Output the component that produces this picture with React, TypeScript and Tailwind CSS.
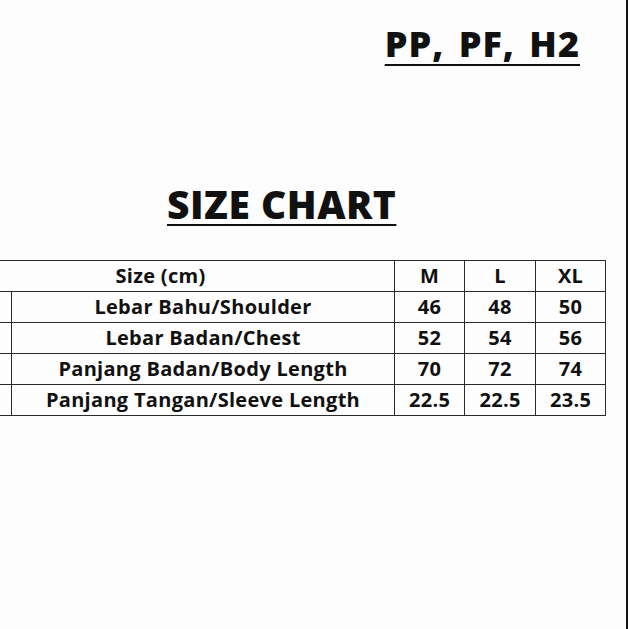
import React from 'react';

const ROWS = [
  { label: 'Lebar Bahu/Shoulder', m: '46', l: '48', xl: '50' },
  { label: 'Lebar Badan/Chest', m: '52', l: '54', xl: '56' },
  { label: 'Panjang Badan/Body Length', m: '70', l: '72', xl: '74' },
  { label: 'Panjang Tangan/Sleeve Length', m: '22.5', l: '22.5', xl: '23.5' },
];

const cell = 'border-[1.5px] border-[#2a2a2a] h-[31px] p-0 text-center align-middle leading-none';

export default function App() {
  return (
    <div className="flex w-[629px] h-[629px] overflow-hidden bg-white" style={{ fontFamily: '"Open Sans", Lato, sans-serif' }}>
      <div className="w-[626px] h-full bg-[#fdfdfd] flex flex-col text-[#111]">
        <div className="h-[22px]" />
        <div className="flex justify-end pr-[46px]">
          <h1 className="text-[36px] font-extrabold leading-[44px] tracking-[1px] [word-spacing:4px] underline decoration-[2px] underline-offset-[7px]">PP, PF, H2</h1>
        </div>
        <div className="h-[114px]" />
        <div className="pl-[167px]">
          <h2 className="text-[39px] font-extrabold leading-[48px] tracking-[0.5px] underline decoration-[2px] underline-offset-[5px]">SIZE CHART</h2>
        </div>
        <div className="h-[32px]" />
        <table className="-ml-[74px] border-collapse table-fixed w-[680px] text-[20px] font-bold tracking-[0.3px]">
          <colgroup>
            <col className="w-[85px]" />
            <col className="w-[383px]" />
            <col className="w-[70px]" />
            <col className="w-[71px]" />
            <col className="w-[70px]" />
          </colgroup>
          <tbody>
            <tr>
              <td colSpan={2} className={cell}>Size (cm)</td>
              <td className={cell}>M</td>
              <td className={cell}>L</td>
              <td className={cell}>XL</td>
            </tr>
            {ROWS.map((r) => (
              <tr key={r.label}>
                <td className={cell}></td>
                <td className={cell}>{r.label}</td>
                <td className={cell}>{r.m}</td>
                <td className={cell}>{r.l}</td>
                <td className={cell}>{r.xl}</td>
              </tr>
            ))}
          </tbody>
        </table>
      </div>
      <div className="w-[2px] h-full bg-[#111]" />
      <div className="flex-1 h-full bg-white" />
    </div>
  );
}
